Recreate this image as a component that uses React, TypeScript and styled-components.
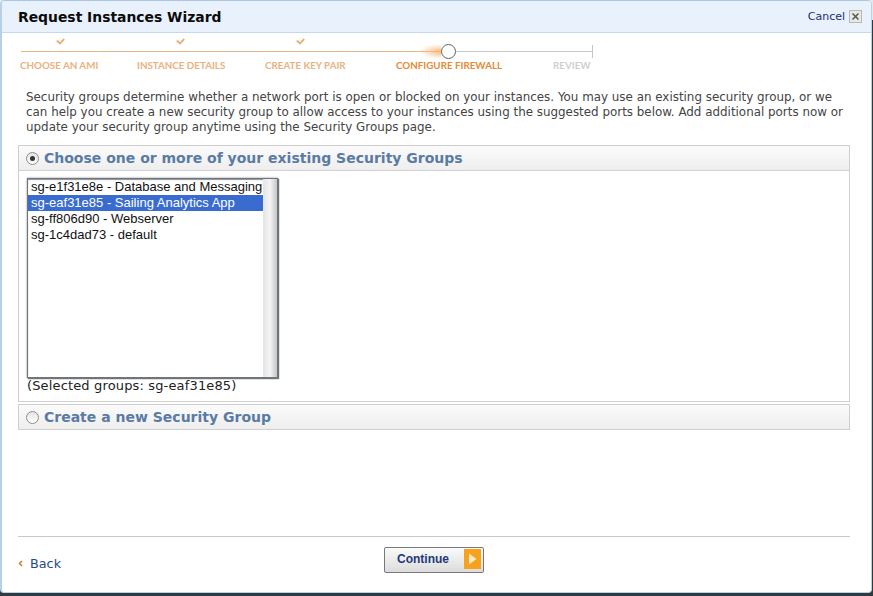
import React from "react";
import styled, { createGlobalStyle } from "styled-components";

const GlobalStyle = createGlobalStyle`
  html, body { margin: 0; padding: 0; }
  * { box-sizing: border-box; }
`;

const steps = [
  { label: "CHOOSE AN AMI", state: "done", width: 117 },
  { label: "INSTANCE DETAILS", state: "done", width: 128 },
  { label: "CREATE KEY PAIR", state: "done", width: 131 },
  { label: "CONFIGURE FIREWALL", state: "current", width: 157 },
  { label: "REVIEW", state: "todo", width: 40 },
];

const groups = [
  { id: "sg-e1f31e8e - Database and Messaging", selected: false },
  { id: "sg-eaf31e85 - Sailing Analytics App", selected: true },
  { id: "sg-ff806d90 - Webserver", selected: false },
  { id: "sg-1c4dad73 - default", selected: false },
];

const Page = styled.div`
  width: 873px;
  height: 596px;
  overflow: hidden;
  background: linear-gradient(#dfe9f2 0 20px, #2f3a40 20px);
`;

const Dialog = styled.div`
  width: 872px;
  height: 593px;
  display: flex;
  flex-direction: column;
  background: #fff;
  border-top: 1px solid #a9c6e0;
  border-left: 2px solid #b5d0e8;
  border-right: 1px solid #b5d0e8;
  border-bottom: 1px solid #b5d0e8;
  border-radius: 5px 5px 4px 4px;
  font-family: "DejaVu Sans", Verdana, sans-serif;
`;

const Header = styled.header`
  height: 32px;
  flex: none;
  display: flex;
  align-items: center;
  justify-content: space-between;
  padding: 0 9px 0 16px;
  background: #e8f1fc;
  border-radius: 4px 4px 0 0;
  border-bottom: 1px solid #c5d8ec;
`;

const Title = styled.h1`
  margin: 0;
  font-size: 13.9px;
  font-weight: bold;
  color: #0b0b0b;
`;

const Cancel = styled.a`
  display: flex;
  align-items: center;
  gap: 4px;
  font-size: 11px;
  color: #1d2f6b;
`;

const CloseBox = styled.span`
  width: 13px;
  height: 13px;
  display: flex;
  align-items: center;
  justify-content: center;
  background: #e9e9e4;
  border: 1px solid #b9b9b4;
`;

const Stepper = styled.nav`
  flex: none;
  padding: 5px 0 0 18px;
`;

const CheckRow = styled.div`
  display: flex;
  gap: 111px;
  height: 5px;
  padding-left: 36px;
`;

const Track = styled.div`
  display: flex;
  align-items: center;
  height: 16px;
  width: 572px;
  margin-left: 1px;
`;

const DoneLine = styled.div`
  width: 420px;
  height: 1px;
  background: #e6b98a;
  position: relative;

  &::after {
    content: "";
    position: absolute;
    right: 0;
    top: -7px;
    width: 22px;
    height: 15px;
    background: radial-gradient(ellipse 100% 50% at 100% 50%, rgba(247, 176, 105, 0.85), rgba(247, 184, 120, 0));
  }
`;

const Knob = styled.div`
  flex: none;
  width: 15px;
  height: 15px;
  border-radius: 50%;
  background: #fff;
  border: 1.5px solid #5c6268;
  position: relative;
`;

const TodoLine = styled.div`
  flex: 1;
  height: 1px;
  background: #c6c6c6;
`;

const EndTick = styled.div`
  width: 1px;
  height: 13px;
  background: #c6c6c6;
`;

const Labels = styled.div`
  display: flex;
  margin-top: -2px;
  height: 16px;
  align-items: center;
`;

const StepLabel = styled.span<{ $state: string; $width: number }>`
  width: ${({ $width }) => $width}px;
  flex: none;
  font-family: Lato, sans-serif;
  font-size: 9.8px;
  font-weight: 700;
  white-space: nowrap;
  color: ${({ $state }) =>
    $state === "done" ? "#e9b27f" : $state === "current" ? "#e58a35" : "#cfcfcf"};
`;

const Content = styled.main`
  flex: 1;
  display: flex;
  flex-direction: column;
  padding: 0 21px 0 16px;
`;

const Intro = styled.p`
  margin: 17px 0 10px 8px;
  font-size: 11.9px;
  line-height: 15px;
  color: #444;
`;

const Panel = styled.section`
  border: 1px solid #cfcfcf;
  margin-bottom: 2px;
`;

const PanelHead = styled.div`
  height: 24px;
  display: flex;
  align-items: center;
  gap: 5px;
  padding-left: 7px;
  background: linear-gradient(#fbfbfb, #eeeeee);
`;

const PanelBody = styled.div`
  height: 231px;
  padding: 7px 8px;
  border-top: 1px solid #cfcfcf;
`;

const Radio = styled.span<{ $checked?: boolean }>`
  width: 13px;
  height: 13px;
  flex: none;
  border-radius: 50%;
  display: flex;
  align-items: center;
  justify-content: center;
  border: 1px solid #8d8d8d;
  background: linear-gradient(#e4e4e4, #fff);

  &::after {
    content: "";
    width: 5px;
    height: 5px;
    border-radius: 50%;
    background: ${({ $checked }) => ($checked ? "#333" : "transparent")};
  }
`;

const PanelTitle = styled.h2`
  margin: 0;
  font-size: 14px;
  font-weight: bold;
  color: #5a7ba3;
`;

const ListBox = styled.div`
  width: 251px;
  height: 200px;
  display: flex;
  border: 1px solid #70757c;
  box-shadow: inset 0 1px 1px #8a8f96, 1px 1px 1px #70757c, 0 0 2px #8a8f96;
`;

const Rows = styled.ul`
  flex: 1;
  margin: 0;
  padding: 0;
  list-style: none;
  min-width: 0;
`;

const Row = styled.li<{ $selected: boolean }>`
  height: 16px;
  padding-left: 3px;
  line-height: 16px;
  font-family: "Liberation Sans", Arial, sans-serif;
  font-size: 13px;
  white-space: nowrap;
  color: ${({ $selected }) => ($selected ? "#fff" : "#111")};
  background: ${({ $selected }) => ($selected ? "#3a6cd0" : "transparent")};
`;

const ScrollGutter = styled.div`
  width: 14px;
  flex: none;
  background: linear-gradient(90deg, #e4e4e4, #f4f4f4 50%, #c6c6c6);
`;

const SelectedNote = styled.div`
  margin-top: 0;
  font-size: 13px;
  letter-spacing: 0.15px;
  white-space: nowrap;
  color: #222;
`;

const Footer = styled.footer`
  margin-top: auto;
  height: 56px;
  flex: none;
  border-top: 1px solid #c9c9c9;
  display: grid;
  grid-template-columns: 1fr auto 1fr;
  align-items: start;
  padding-top: 10px;
`;

const Back = styled.a`
  display: flex;
  align-items: center;
  gap: 7px;
  margin-top: 9px;
  font-size: 12.8px;
  color: #2a4a85;
`;

const Continue = styled.button`
  width: 100px;
  height: 26px;
  padding: 0 2px 2px 12px;
  display: flex;
  align-items: center;
  justify-content: space-between;
  border: 1px solid #76787c;
  border-radius: 2px;
  background: linear-gradient(#fafafa, #dcdcdc);
  font-family: "Liberation Sans", Arial, sans-serif;
  font-size: 12px;
  font-weight: bold;
  color: #1d3a78;
`;

const ArrowBox = styled.span`
  width: 17px;
  height: 20px;
  display: flex;
  align-items: center;
  justify-content: center;
  background: #f7a21d;
`;

const Check = () => (
  <svg width="9" height="7" viewBox="0 0 9 7">
    <path d="M0.8 2.4 L4 5.4 L8.2 1" fill="none" stroke="#e9b27f" strokeWidth="2" />
  </svg>
);

export default function App() {
  return (
    <Page>
      <GlobalStyle />
      <Dialog>
        <Header>
          <Title>Request Instances Wizard</Title>
          <Cancel>
            Cancel
            <CloseBox>
              <svg width="7" height="7" viewBox="0 0 7 7">
                <path d="M0.5 0.5 L6.5 6.5 M6.5 0.5 L0.5 6.5" stroke="#555" strokeWidth="1.5" />
              </svg>
            </CloseBox>
          </Cancel>
        </Header>
        <Stepper>
          <CheckRow>
            <Check />
            <Check />
            <Check />
          </CheckRow>
          <Track>
            <DoneLine />
            <Knob />
            <TodoLine />
            <EndTick />
          </Track>
          <Labels>
            {steps.map((s) => (
              <StepLabel key={s.label} $state={s.state} $width={s.width}>
                {s.label}
              </StepLabel>
            ))}
          </Labels>
        </Stepper>
        <Content>
          <Intro>
            Security groups determine whether a network port is open or blocked on your instances. You may use an
            existing security group, or we can help you create a new security group to allow access to your instances
            using the suggested ports below. Add additional ports now or update your security group anytime using the
            Security Groups page.
          </Intro>
          <Panel>
            <PanelHead>
              <Radio $checked />
              <PanelTitle>Choose one or more of your existing Security Groups</PanelTitle>
            </PanelHead>
            <PanelBody>
              <ListBox>
                <Rows>
                  {groups.map((g) => (
                    <Row key={g.id} $selected={g.selected}>
                      {g.id}
                    </Row>
                  ))}
                </Rows>
                <ScrollGutter />
              </ListBox>
              <SelectedNote>(Selected groups: sg-eaf31e85)</SelectedNote>
            </PanelBody>
          </Panel>
          <Panel>
            <PanelHead>
              <Radio />
              <PanelTitle>Create a new Security Group</PanelTitle>
            </PanelHead>
          </Panel>
          <Footer>
            <Back>
              <svg width="5" height="7" viewBox="0 0 5 7">
                <path d="M4 1 L1.5 3.5 L4 6" fill="none" stroke="#d9782e" strokeWidth="1.5" />
              </svg>
              Back
            </Back>
            <Continue>
              Continue
              <ArrowBox>
                <svg width="9" height="12" viewBox="0 0 9 12">
                  <path d="M1 0.5 L8.5 6 L1 11.5 Z" fill="#fde9c4" />
                </svg>
              </ArrowBox>
            </Continue>
          </Footer>
        </Content>
      </Dialog>
    </Page>
  );
}
